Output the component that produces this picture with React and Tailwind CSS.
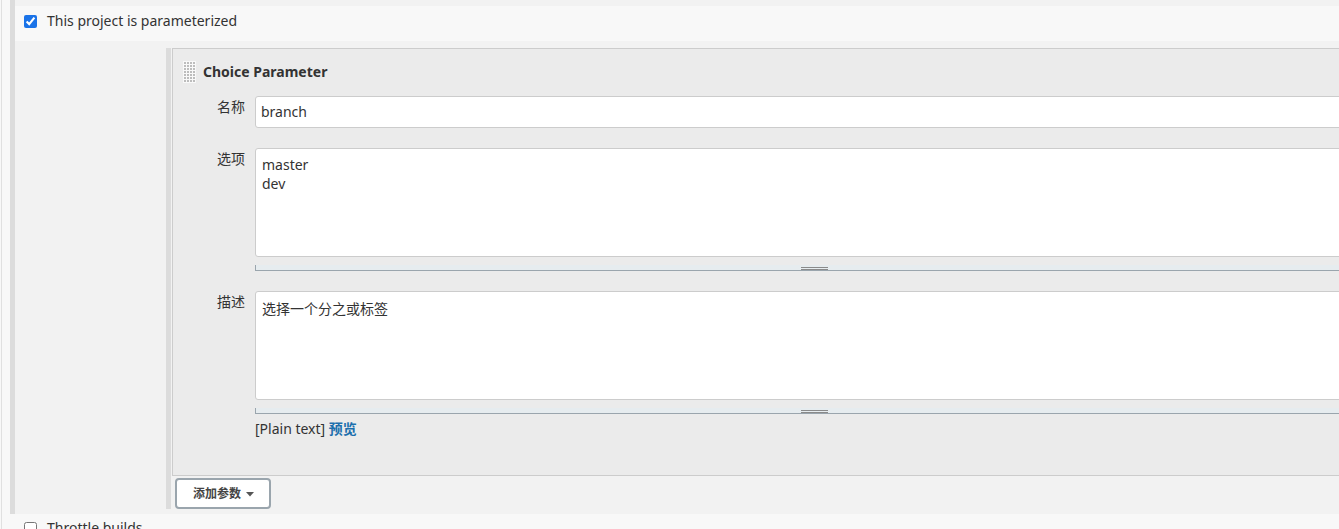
import React from "react";

const FONT = { fontFamily: '"Noto Sans", "Noto Sans CJK SC", sans-serif' };

function Grip() {
  const dots = [];
  for (let r = 0; r < 7; r++) {
    for (let c = 0; c < 4; c++) {
      dots.push(<rect key={r + "-" + c} x={1 + c * 3} y={1 + r * 3} width="2" height="2" fill="#bdbdbd" />);
    }
  }
  return (
    <svg width="13" height="22" viewBox="0 0 13 22" className="shrink-0">
      <rect x="0" y="0" width="13" height="22" fill="#f9f9f9" />
      {dots}
    </svg>
  );
}

function ResizeBar() {
  return (
    <div className="mt-[8px] h-[6px] w-[1118px] border-l border-b border-[#9aa5ad] bg-[#e6ecef] flex justify-center items-start">
      <div className="mt-[2px] w-[27px] h-[3px] border-t border-b border-[#8a8a8a]"></div>
    </div>
  );
}

export default function App() {
  return (
    <div className="w-[1339px] h-[529px] overflow-hidden bg-[#f8f8f8] pl-[1px] text-[14px] text-[#333]" style={FONT}>
      <div className="h-full border-l border-[#e0e0e0] pl-[8px]">
        {/* parameterized section */}
        <div className="border-l-[5px] border-[#dcdcdc] bg-[#f2f2f2] pt-[6px] pb-[5px]">
          <div className="h-[35px] bg-[#f8f8f8] flex items-center pl-[9px] pb-[5px]">
            <input type="checkbox" defaultChecked className="w-[13px] h-[13px] m-0 accent-[#1a73e8]" />
            <span className="ml-[10px] leading-[20px]">This project is parameterized</span>
          </div>
          <div className="pt-[7px] pl-[151px]">
            <div className="border-l-[5px] border-[#dcdcdc] pl-[1px]">
              {/* panel */}
              <div className="w-[1300px] border border-r-0 border-[#cccccc] bg-[#ebebeb] pb-[36px]">
                <div className="h-[47px] flex items-start pt-[12px] pl-[10px]">
                  <Grip />
                  <span className="ml-[7px] font-bold leading-[22px]">Choice Parameter</span>
                </div>
                {/* name */}
                <div className="flex">
                  <div className="w-[82px] shrink-0 text-right pr-[10px] pt-[1px] leading-[20px]">名称</div>
                  <div className="w-[1118px] h-[32px] bg-white border border-[#cccccc] rounded-[3px] flex items-center pl-[5px] leading-[20px]">branch</div>
                </div>
                {/* choices */}
                <div className="flex mt-[20px]">
                  <div className="w-[82px] shrink-0 text-right pr-[10px] pt-[1px] leading-[20px]">选项</div>
                  <div>
                    <div className="w-[1118px] h-[109px] bg-white border border-[#cccccc] rounded-[3px] pl-[6px] pt-[6px] leading-[19px]">
                      <div>master</div>
                      <div>dev</div>
                    </div>
                    <ResizeBar />
                  </div>
                </div>
                {/* description */}
                <div className="flex mt-[20px]">
                  <div className="w-[82px] shrink-0 text-right pr-[10px] pt-[1px] leading-[20px]">描述</div>
                  <div>
                    <div className="w-[1118px] h-[109px] bg-white border border-[#cccccc] rounded-[3px] pl-[6px] pt-[7px] leading-[20px]">
                      选择一个分之或标签
                    </div>
                    <ResizeBar />
                    <div className="mt-[5px] leading-[20px]">
                      [Plain text] <span className="font-bold text-[#1c6fad]">预览</span>
                    </div>
                  </div>
                </div>
              </div>
              {/* add param button */}
              <div className="pt-[2px] pl-[3px]">
                <div className="w-[96px] h-[31px] bg-white border-[2px] border-[#9aa5ad] rounded-[4px] flex items-center pl-[16px] text-[12px] font-bold text-[#444]">
                  <span>添加参数</span>
                  <svg width="8" height="5" viewBox="0 0 8 5" className="ml-[5px] mt-[1px]">
                    <path d="M0 0 L8 0 L4 4.5 Z" fill="#555" />
                  </svg>
                </div>
              </div>
            </div>
          </div>
        </div>
        {/* throttle row */}
        <div className="flex items-start pl-[14px] pt-[4px]">
          <input type="checkbox" className="w-[13px] h-[13px] m-0 mt-[4px] shrink-0" />
          <span className="ml-[10px] leading-[20px]">Throttle builds</span>
        </div>
      </div>
    </div>
  );
}
